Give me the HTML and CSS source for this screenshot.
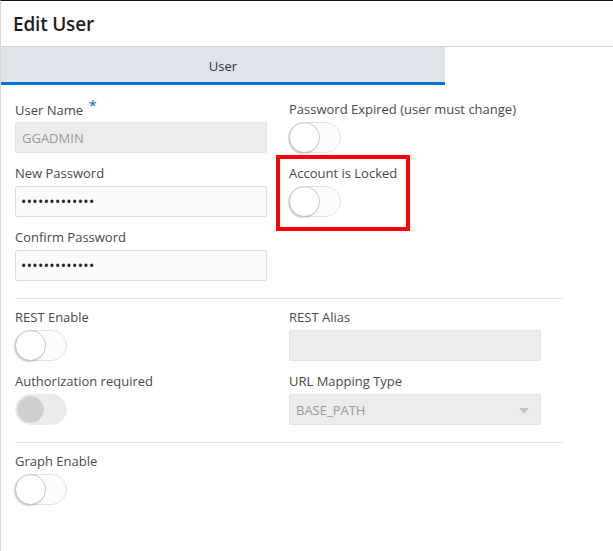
FILE: index.html
```html
<!DOCTYPE html>
<html>
<head>
<meta charset="utf-8">
<link rel="stylesheet" href="styles.css">
</head>
<body>
<div class="page">
  <header class="header"><h1 class="title">Edit User</h1></header>
  <nav class="tabs"><div class="tab active">User</div></nav>
  <main class="form">
    <section class="section first">
      <div class="field">
        <label class="label">User Name <span class="req">*</span></label>
        <div class="input disabled">GGADMIN</div>
      </div>
      <div class="field">
        <label class="label">Password Expired (user must change)</label>
        <div class="toggle"><span class="knob"></span></div>
      </div>
      <div class="field">
        <label class="label">New Password</label>
        <div class="input dots">•••••••••••••</div>
      </div>
      <div class="field locked">
        <label class="label">Account is Locked</label>
        <div class="toggle"><span class="knob"></span></div>
      </div>
      <div class="field">
        <label class="label">Confirm Password</label>
        <div class="input dots">•••••••••••••</div>
      </div>
    </section>
    <section class="section">
      <div class="field">
        <label class="label">REST Enable</label>
        <div class="toggle"><span class="knob"></span></div>
      </div>
      <div class="field">
        <label class="label">REST Alias</label>
        <div class="input disabled"></div>
      </div>
      <div class="field">
        <label class="label">Authorization required</label>
        <div class="toggle off-disabled"><span class="knob"></span></div>
      </div>
      <div class="field">
        <label class="label">URL Mapping Type</label>
        <div class="input disabled select">BASE_PATH<span class="caret"></span></div>
      </div>
    </section>
    <section class="section last">
      <div class="field">
        <label class="label">Graph Enable</label>
        <div class="toggle"><span class="knob"></span></div>
      </div>
    </section>
  </main>
</div>
</body>
</html>
```
FILE: styles.css
```css
*, *::before, *::after { box-sizing: border-box; }
html, body { margin: 0; padding: 0; background: #fff; }
body {
  font-family: "Open Sans", "Noto Sans", sans-serif;
  color: #4a4a4a;
  font-size: 13px;
  width: 613px;
  height: 551px;
  overflow: hidden;
}
.page {
  border-top: 1px solid #161513;
  border-left: 1px solid #d6d6d6;
  height: 551px;
}
.header {
  height: 46px;
  border-bottom: 1px solid #d4d4d4;
  display: flex;
  align-items: center;
  padding-left: 12px;
}
.title {
  margin: 0;
  font-size: 19px;
  font-weight: 600;
  color: #1f1f1f;
  letter-spacing: -0.2px;
}
.tabs {
  display: flex;
  height: 38px;
}
.tab {
  width: 444px;
  background: #dfe3ea;
  border-bottom: 3px solid #0572ce;
  display: flex;
  align-items: center;
  justify-content: center;
  color: #333;
  font-size: 13px;
  padding-top: 3px;
}
.form {
  padding: 14px 0 0 14px;
  width: 562px;
}
.section {
  display: grid;
  grid-template-columns: 252px 252px;
  column-gap: 22px;
  row-gap: 10px;
  padding: 8px 0 17px;
  border-bottom: 1px solid #e2e2e2;
  align-items: start;
}
.section.first { padding-top: 0; }
.section.last { border-bottom: none; }
.field {
  display: flex;
  flex-direction: column;
  gap: 3px;
}
.label {
  line-height: 20px;
  height: 20px;
  white-space: nowrap;
}
.req {
  color: #0572ce;
  font-size: 15px;
  position: relative;
  top: -4px;
  margin-left: 2px;
}
.input {
  height: 31px;
  border: 1px solid #dedede;
  background: #fafafa;
  border-radius: 2px;
  display: flex;
  align-items: center;
  padding-left: 6px;
  color: #222;
}
.input.disabled {
  background: #ececec;
  border-color: #e4e4e4;
  color: #9a9a9a;
}
.input.dots {
  font-size: 14px;
  letter-spacing: 0.4px;
  color: #222;
  padding-left: 5px;
}
.select { position: relative; }
.caret {
  position: absolute;
  right: 11px;
  top: 13px;
  width: 0;
  height: 0;
  border-left: 5px solid transparent;
  border-right: 5px solid transparent;
  border-top: 6px solid #c4c4c4;
}
.toggle {
  width: 52px;
  height: 31px;
  border: 1px solid #e2e2e2;
  border-radius: 16px;
  background: #fcfcfc;
  position: relative;
}
.knob {
  position: absolute;
  left: -1px;
  top: -1px;
  width: 31px;
  height: 31px;
  border-radius: 50%;
  background: #fff;
  border: 1px solid #c8c8c8;
  box-shadow: -1px 1px 1px rgba(0,0,0,0.18);
}
.toggle.off-disabled {
  background: #ebebeb;
  border-color: #ebebeb;
}
.toggle.off-disabled .knob {
  left: 1px;
  top: 1px;
  width: 27px;
  height: 27px;
  background: #cfcfcf;
  border-color: #cfcfcf;
  box-shadow: none;
}
.locked { position: relative; }
.locked::after {
  content: "";
  position: absolute;
  left: -13px;
  top: -8px;
  width: 134px;
  height: 76px;
  border: 4px solid #ff0000;
}
```
